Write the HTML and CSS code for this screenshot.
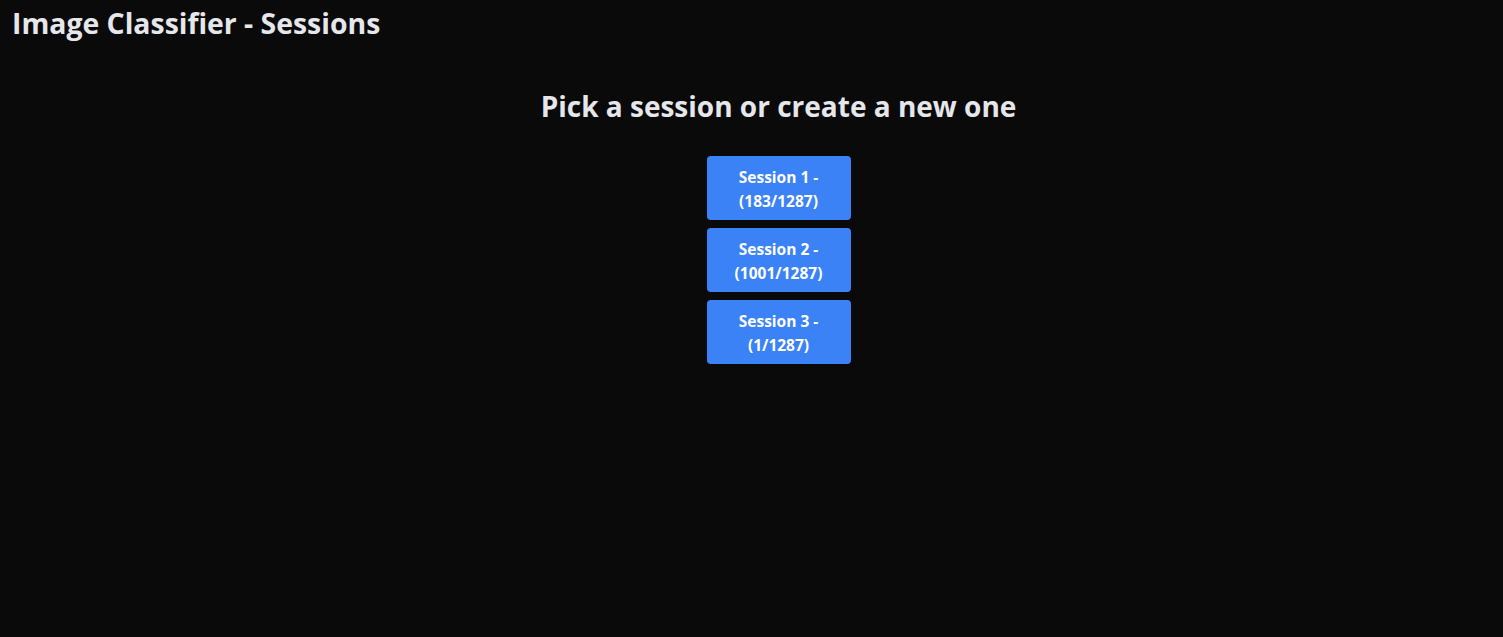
FILE: index.html
```html
<!DOCTYPE html>
<html>
<head>
<meta charset="utf-8">
<link rel="stylesheet" href="styles.css">
<title>Image Classifier - Sessions</title>
</head>
<body>
<header class="topbar">
  <h1 class="app-title">Image Classifier - Sessions</h1>
</header>
<main class="main">
  <h2 class="heading">Pick a session or create a new one</h2>
  <div class="sessions">
    <button class="session-btn">Session 1 -<br>(183/1287)</button>
    <button class="session-btn">Session 2 -<br>(1001/1287)</button>
    <button class="session-btn">Session 3 -<br>(1/1287)</button>
  </div>
</main>
</body>
</html>
```
FILE: styles.css
```css
html, body {
  margin: 0;
  padding: 0;
  background: #0a0a0a;
  color: #e5e7eb;
  font-family: "Open Sans", "Noto Sans", sans-serif;
  height: 100%;
}
.topbar {
  padding: 5px 12px 7px;
}
.app-title {
  margin: 0;
  font-size: 28.4px;
  line-height: 36px;
  font-weight: 700;
}
.main {
  display: flex;
  flex-direction: column;
  align-items: center;
  padding-left: 54px;
  padding-top: 38px;
}
.heading {
  margin: 0 0 30px;
  font-size: 28px;
  line-height: 40px;
  font-weight: 700;
}
.sessions {
  display: flex;
  flex-direction: column;
  gap: 8px;
}
.session-btn {
  width: 144px;
  height: 64px;
  padding: 9px 8px 7px;
  border: none;
  border-radius: 4px;
  background: #3b82f6;
  color: #ffffff;
  font-family: inherit;
  font-size: 15.5px;
  line-height: 24px;
  font-weight: 700;
  text-align: center;
  cursor: pointer;
}
```
